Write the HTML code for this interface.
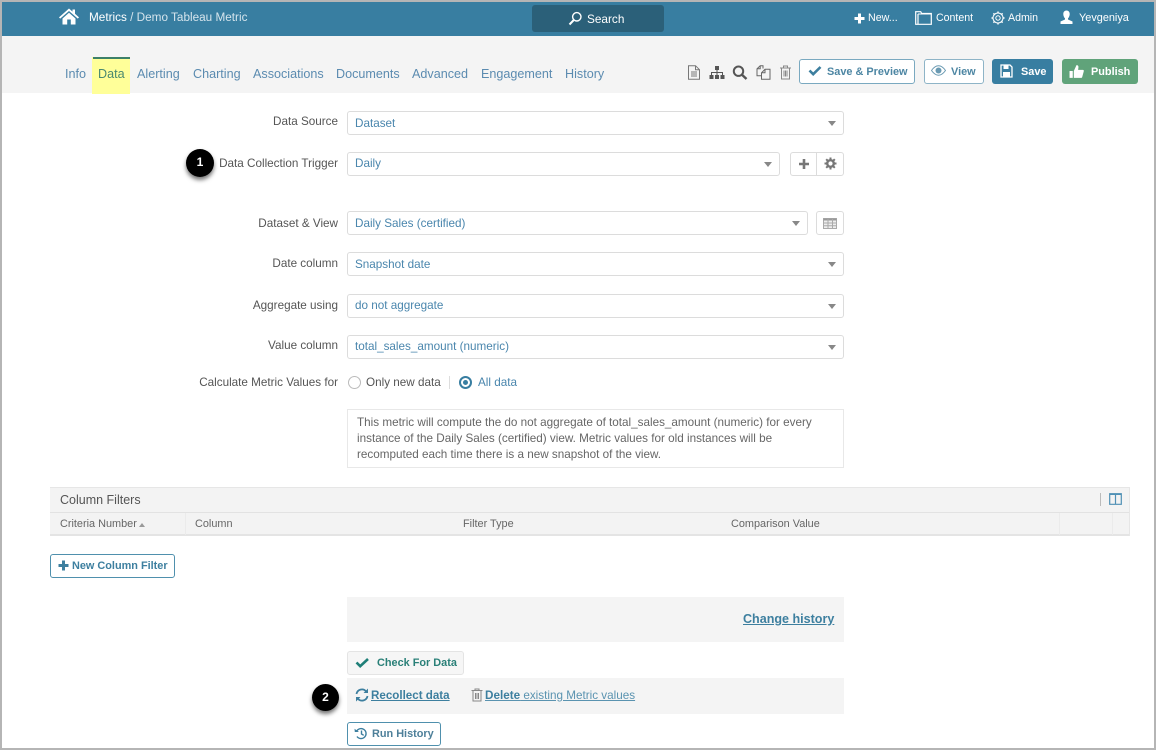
<!DOCTYPE html>
<html><head><meta charset="utf-8"><style>
html,body{margin:0;padding:0;background:#fff}
#p{position:relative;width:1156px;height:750px;overflow:hidden;background:#fff;font-family:"Liberation Sans",sans-serif;font-size:12px;color:#555}
#p div,#p span.a,#p svg{position:absolute}
.t{white-space:nowrap;line-height:16px}
.tab{top:66px;font-size:12.6px;color:#5b8bb0;white-space:nowrap;line-height:16px}
.l{right:818px;color:#555;white-space:nowrap;line-height:16px;font-size:11.7px}
.s{left:347px;height:22px;border:1px solid #dcdcdc;border-radius:3px;background:#fff;color:#4a86ad;line-height:22px;text-indent:7px;font-size:11.7px;box-sizing:content-box}
.s i{position:absolute;right:7px;top:9px;width:0;height:0;border:4.5px solid transparent;border-top:5px solid #888;border-bottom:0}
.b{box-sizing:border-box;border-radius:3px;font-weight:bold;font-size:10.9px;line-height:22px;white-space:nowrap}
.o{border:1px solid #4f90ad;background:#fff;color:#3d7f9f}
.c{width:28px;height:28px;border-radius:50%;background:#000;color:#fff;font-weight:bold;font-size:12px;line-height:27px;text-align:center;box-shadow:0 3px 4px rgba(0,0,0,.55),0 0 0 1.5px #fff}
.th{top:516px;color:#666;line-height:16px;white-space:nowrap;font-size:10.9px}
a{color:#3d7f9f}
</style></head><body><div id="p">

<div style="left:0;top:0;width:1156px;height:2px;background:#b5b5b5"></div>
<div style="left:0;top:0;width:2px;height:750px;background:#b5b5b5"></div>
<div style="left:1154px;top:0;width:2px;height:750px;background:#b5b5b5"></div>
<div style="left:0;top:748px;width:1156px;height:2px;background:#b5b5b5"></div>

<div style="left:2px;top:2px;width:1152px;height:34px;background:#387ea1"></div>
<div style="left:2px;top:36px;width:1152px;height:57px;background:#f4f4f4"></div>

<svg style="left:59px;top:8px" width="20" height="17" viewBox="0 0 20 17"><path fill="#fff" d="M10 0.5 L13.5 3.6 V1.5 H16 V5.8 L20 9.4 L18.8 10.6 L10 3 L1.2 10.6 L0 9.4 Z M3.5 10.5 L10 4.8 L16.5 10.5 V16.5 H11.8 V11.5 H8.2 V16.5 H3.5 Z"/></svg>
<div class="t" style="left:89px;top:10px;font-size:11.75px;color:#fff">Metrics <span style="color:#d5e4ec">/ Demo Tableau Metric</span></div>

<div style="left:532px;top:5px;width:132px;height:27px;background:#2b6079;border-radius:3px"></div>
<svg style="left:568px;top:11px" width="15" height="15" viewBox="0 0 15 15"><circle cx="8.8" cy="5.8" r="4.2" fill="none" stroke="#fff" stroke-width="1.4"/><path d="M5.8 9 L1.5 13.5" stroke="#fff" stroke-width="2"/></svg>
<div class="t" style="left:587px;top:11px;font-size:11.8px;color:#fff">Search</div>

<svg style="left:854px;top:13px" width="11" height="11" viewBox="0 0 11 11"><path d="M4 0.5h3v3.5h3.5v3H7v3.5H4V7H0.5V4H4z" fill="#fff"/></svg>
<div class="t" style="left:868px;top:10px;font-size:10.7px;color:#fff">New...</div>
<svg style="left:915px;top:11px" width="17" height="14" viewBox="0 0 17 14"><path d="M.7.7h5l1 1.8h9.6v10.8H.7z M3 3v10.3" fill="none" stroke="#fff" stroke-width="1.2"/><path d="M3 3h13" stroke="#fff" stroke-width="1"/></svg>
<div class="t" style="left:936px;top:10px;font-size:10.6px;color:#fff">Content</div>
<svg style="left:991px;top:11px" width="14" height="14" viewBox="0 0 14 14"><circle cx="7" cy="7" r="2.2" fill="none" stroke="#fff"/><circle cx="7" cy="7" r="5" fill="none" stroke="#fff" stroke-width="1"/><path d="M7 .5v1.5M7 12v1.5M.5 7H2M12 7h1.5M2.4 2.4l1 1M10.6 10.6l1 1M2.4 11.6l1-1M10.6 3.4l1-1" stroke="#fff" stroke-width="1.4"/></svg>
<div class="t" style="left:1008px;top:10px;font-size:10.6px;color:#fff">Admin</div>
<svg style="left:1060px;top:10px" width="13" height="14" viewBox="0 0 13 14"><path fill="#fff" d="M6.5.5c2 0 3.2 1.5 3.2 3.5S8.6 8 8 8.3v1.2l4.5 2V14H.5v-2.500L5 9.500V8.300C4.400 8 3.300 6 3.300 4S4.500.500 6.500.500z"/></svg>
<div class="t" style="left:1079px;top:10px;font-size:10.9px;color:#fff">Yevgeniya</div>

<div style="left:92px;top:57px;width:38px;height:37px;background:#ffff99"></div>
<div style="left:93px;top:57px;width:37px;height:2px;background:#3c8068"></div>
<div class="tab" style="left:65px">Info</div>
<div class="tab" style="left:98px;color:#4a8a6f">Data</div>
<div class="tab" style="left:137px">Alerting</div>
<div class="tab" style="left:193px">Charting</div>
<div class="tab" style="left:253px">Associations</div>
<div class="tab" style="left:336px">Documents</div>
<div class="tab" style="left:412px">Advanced</div>
<div class="tab" style="left:481px">Engagement</div>
<div class="tab" style="left:565px">History</div>

<svg style="left:687px;top:65px" width="14" height="15" viewBox="0 0 14 15"><path d="M1.500.7h7l4 4v9.600h-11zM8.500.7v4h4M4 7h6M4 9h6M4 11h6" fill="none" stroke="#777" stroke-width="1"/></svg>
<svg style="left:709px;top:65px" width="16" height="15" viewBox="0 0 16 15"><path fill="#555" d="M6 1h4v4H8.500v2H14v3h1.500v4h-4v-4H13V8H8.500v2H10v4H6v-4h1.500V8H3v2h1.500v4h-4v-4H2V7h5.500V5H6z"/></svg>
<svg style="left:732px;top:65px" width="16" height="15" viewBox="0 0 16 15"><circle cx="6.500" cy="6.200" r="4.700" fill="none" stroke="#555" stroke-width="2"/><path d="M10 9.800L14.500 14" stroke="#555" stroke-width="2.400"/></svg>
<svg style="left:756px;top:65px" width="15" height="15" viewBox="0 0 15 15"><path d="M7 3.500V.8H4.200L1 3.800v6.900h4.500M4.200.8v3H1" fill="none" stroke="#666" stroke-width="1"/><path d="M9 4.300h5v10H5.500V7.800zM9 4.300v3.500H5.500" fill="none" stroke="#666" stroke-width="1"/></svg>
<svg style="left:779px;top:65px" width="13" height="15" viewBox="0 0 13 15"><path d="M1 3h11M4.500 3V1h4v2M2.500 3v11h8V3M5 5.500v6M6.500 5.500v6M8 5.500v6" fill="none" stroke="#888" stroke-width="1"/></svg>

<div class="b o" style="left:799px;top:59px;width:116px;height:25px;border-color:#7aa9c0"></div>
<svg style="left:808px;top:65px" width="14" height="11" viewBox="0 0 14 11"><path d="M1.500 5.500l3.700 3.700L12.500 2" fill="none" stroke="#3d7f9f" stroke-width="2.600"/></svg>
<div class="t b" style="left:827px;top:61px;color:#4d86a3">Save &amp; Preview</div>
<div class="b o" style="left:924px;top:59px;width:60px;height:25px;border-color:#8eb4c7"></div>
<svg style="left:931px;top:65px" width="15" height="11" viewBox="0 0 15 11"><path d="M.5 5.500C3 2 5 .8 7.500.8S12 2 14.500 5.500C12 9 10 10.200 7.500 10.200S3 9 .5 5.500z" fill="none" stroke="#6a9ab2" stroke-width="1"/><circle cx="7.500" cy="5.500" r="3" fill="#6a9ab2"/></svg>
<div class="t b" style="left:951px;top:61px;color:#4d86a3">View</div>
<div class="b" style="left:992px;top:59px;width:61px;height:25px;background:#387ea1"></div>
<svg style="left:1000px;top:64px" width="13" height="14" viewBox="0 0 13 14"><path d="M1 1h9l2 2v10H1z" fill="none" stroke="#fff" stroke-width="1.300"/><path d="M3.500 1h5v4h-5zM3 8h7v5H3z" fill="#fff"/></svg>
<div class="t b" style="left:1021px;top:61px;color:#fff">Save</div>
<div class="b" style="left:1062px;top:59px;width:76px;height:25px;background:#60a37a"></div>
<svg style="left:1069px;top:64px" width="15" height="15" viewBox="0 0 14 14"><path fill="#fff" d="M.5 6.500h3V13h-3zM4.500 6.500L7 1c1.500 0 2 1 1.800 2.300L8.500 5.500H13c.7 0 1 .7.800 1.300l-1.500 5.500c-.2.500-.6.700-1 .7H4.500z"/></svg>
<div class="t b" style="left:1091px;top:61px;color:#fff">Publish</div>

<div class="l" style="top:114px">Data Source</div>
<div class="s" style="top:111px;width:495px;line-height:23px">Dataset<i></i></div>

<div class="c" style="left:186px;top:149px">1</div>
<div class="l" style="top:156px">Data Collection Trigger</div>
<div class="s" style="top:152px;width:431px">Daily<i></i></div>
<div style="left:790px;top:152px;width:52px;height:22px;border:1px solid #dcdcdc;border-radius:3px"></div>
<div style="left:816px;top:152px;width:1px;height:24px;background:#dcdcdc"></div>
<svg style="left:798px;top:158px" width="12" height="12" viewBox="0 0 12 12"><path d="M4.700 1h2.600v3.700H11v2.600H7.300V11H4.700V7.300H1V4.700h3.700z" fill="#777"/></svg>
<svg style="left:824px;top:157px" width="13" height="13" viewBox="0 0 13 13"><circle cx="6.500" cy="6.500" r="3.300" fill="none" stroke="#777" stroke-width="2.400"/><path d="M6.500.5v2.500M6.500 10v2.500M.5 6.500H3M10 6.500h2.500M2.200 2.200L4 4M9 9l1.800 1.800M2.200 10.800L4 9M9 4l1.800-1.800" stroke="#777" stroke-width="2"/></svg>

<div class="l" style="top:216px">Dataset &amp; View</div>
<div class="s" style="top:211px;width:459px;line-height:24px">Daily Sales (certified)<i></i></div>
<div style="left:816px;top:211px;width:26px;height:22px;border:1px solid #dcdcdc;border-radius:3px"></div>
<svg style="left:823px;top:218px" width="14" height="11" viewBox="0 0 14 11"><path d="M.5.500h13v10H.5z" fill="#eee" stroke="#aaa"/><path d="M.5 1.500h13" stroke="#999" stroke-width="2"/><path d="M.5 5h13M.5 7.800h13M5 1v9M9.500 1v9" stroke="#aaa"/></svg>

<div class="l" style="top:256px">Date column</div>
<div class="s" style="top:252px;width:495px;line-height:24px">Snapshot date<i></i></div>
<div class="l" style="top:298px">Aggregate using</div>
<div class="s" style="top:294px;width:495px">do not aggregate<i></i></div>
<div class="l" style="top:338px">Value column</div>
<div class="s" style="top:335px;width:495px">total_sales_amount (numeric)<i></i></div>

<div class="l" style="top:375px">Calculate Metric Values for</div>
<div style="left:348px;top:376px;width:11px;height:11px;border:1px solid #bbb;border-radius:50%"></div>
<div class="t" style="left:366px;top:375px;color:#555;font-size:11.7px">Only new data</div>
<div style="left:449px;top:376px;width:1px;height:13px;background:#ddd"></div>
<div style="left:459px;top:376px;width:9px;height:9px;border:2px solid #387ea1;border-radius:50%"></div>
<div style="left:463px;top:380px;width:5px;height:5px;background:#387ea1;border-radius:50%"></div>
<div class="t" style="left:478px;top:375px;color:#4a86ad;font-size:11.7px">All data</div>

<div style="left:347px;top:409px;width:495px;height:57px;border:1px solid #e8e8e8"></div>
<div style="left:357px;top:415px;font-size:11.7px;line-height:16px;color:#666;white-space:nowrap">This metric will compute the do not aggregate of total_sales_amount (numeric) for every<br>instance of the Daily Sales (certified) view. Metric values for old instances will be<br>recomputed each time there is a new snapshot of the view.</div>

<div style="left:50px;top:487px;width:1080px;height:49px;background:#f3f3f3;border-top:1px solid #e6e6e6;border-bottom:2px solid #e4e4e4;box-sizing:border-box"></div>
<div style="left:50px;top:512px;width:1080px;height:1px;background:#e2e2e2"></div>
<div style="left:185px;top:513px;width:1px;height:22px;background:#ebebeb"></div>
<div style="left:1059px;top:513px;width:1px;height:22px;background:#ebebeb"></div>
<div style="left:1112px;top:513px;width:1px;height:22px;background:#ebebeb"></div>
<div style="left:1129px;top:487px;width:1px;height:49px;background:#e6e6e6"></div>
<div class="t" style="left:60px;top:492px;font-size:12.5px;color:#555">Column Filters</div>
<div style="left:1100px;top:493px;width:1px;height:13px;background:#bbb"></div>
<svg style="left:1109px;top:493px" width="13" height="12" viewBox="0 0 13 12"><path d="M.7.700h11.600v10.600H.7zM6.500 1v10" fill="none" stroke="#4f90b5" stroke-width="1.200"/><path d="M.7 1.200h11.600" stroke="#4f90b5" stroke-width="1.600"/></svg>
<div class="th" style="left:60px">Criteria Number</div>
<div style="left:139px;top:523px;width:0;height:0;border:3px solid transparent;border-bottom:4px solid #999;border-top:0"></div>
<div class="th" style="left:195px">Column</div>
<div class="th" style="left:463px">Filter Type</div>
<div class="th" style="left:731px">Comparison Value</div>

<div class="b o" style="left:50px;top:554px;width:125px;height:24px"></div>
<svg style="left:58px;top:560px" width="11" height="11" viewBox="0 0 11 11"><path d="M4 .5h3v3.500h3.500v3H7v3.500H4V7H.5V4H4z" fill="#3d7f9f"/></svg>
<div class="t b" style="left:72px;top:555px;color:#3d7f9f">New Column Filter</div>

<div style="left:347px;top:597px;width:497px;height:45px;background:#f4f4f4"></div>
<div class="t" style="left:743px;top:611px;font-weight:bold;font-size:12.55px;color:#3d7f9f;text-decoration:underline">Change history</div>

<div style="left:347px;top:651px;width:117px;height:24px;border:1px solid #e4e4e4;border-radius:3px;background:#f6f6f6;box-sizing:border-box"></div>
<svg style="left:355px;top:657px" width="15" height="11" viewBox="0 0 15 11"><path d="M1.500 5.500l3.700 3.700L13 2" fill="none" stroke="#1f7f78" stroke-width="2.600"/></svg>
<div class="t b" style="left:377px;top:652px;color:#2a8078">Check For Data</div>

<div style="left:347px;top:678px;width:497px;height:36px;background:#f4f4f4"></div>
<div class="c" style="left:312px;top:684px;width:27px;height:27px">2</div>
<svg style="left:355px;top:688px" width="14" height="14" viewBox="0 0 14 14"><path d="M1.500 6A5.500 5.500 0 0 1 11 3.200M12.500 8A5.500 5.500 0 0 1 3 10.800" fill="none" stroke="#3d7f9f" stroke-width="1.800"/><path d="M13 .5v4.500H8.500zM1 13.500V9h4.500z" fill="#3d7f9f"/></svg>
<div class="t" style="left:371px;top:688px;font-weight:bold;font-size:11.6px;color:#3d7f9f;text-decoration:underline">Recollect data</div>
<svg style="left:471px;top:688px" width="12" height="14" viewBox="0 0 12 14"><path d="M.5 2.500h11M4 2.500V1h4v1.500M2 2.500v10.500h8V2.500M4.500 5v6M6 5v6M7.500 5v6" fill="none" stroke="#888" stroke-width="1"/></svg>
<div class="t" style="left:485px;top:688px;font-size:11.7px;color:#5a93b0;text-decoration:underline;white-space:nowrap"><b style="color:#3d7f9f;font-size:11.7px">Delete</b> existing Metric values</div>

<div class="b o" style="left:347px;top:722px;width:94px;height:24px"></div>
<svg style="left:354px;top:727px" width="14" height="13" viewBox="0 0 14 13"><path d="M2.500 4.500A5 5 0 1 1 3 9.500M7.500 3.500v3.500l2.200 1.300" fill="none" stroke="#3d7f9f" stroke-width="1.400"/><path d="M.5 1.800l4.500 3.200H.8z" fill="#3d7f9f"/></svg>
<div class="t b" style="left:372px;top:723px;color:#4d7f99">Run History</div>

</div></body></html>
